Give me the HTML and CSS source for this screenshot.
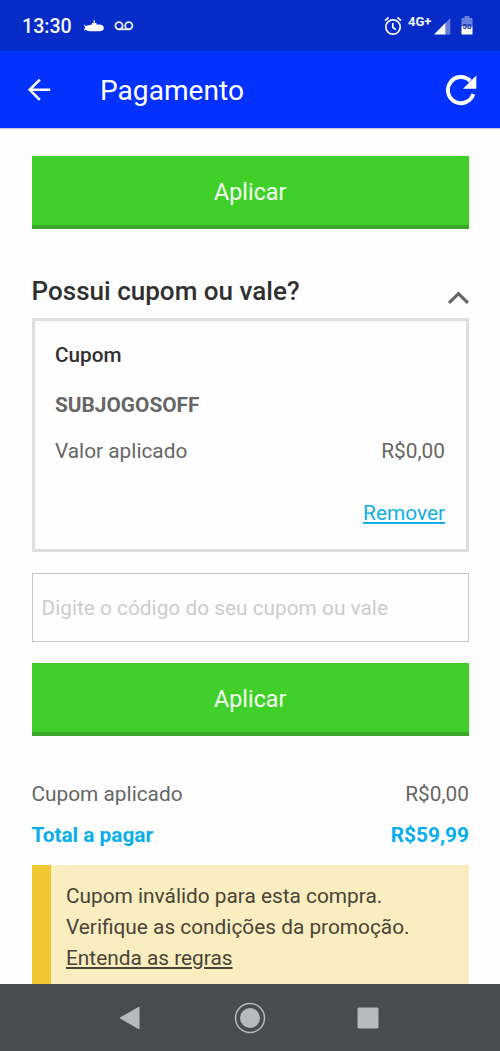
FILE: index.html
```html
<!DOCTYPE html>
<html lang="pt-BR">
<head>
<meta charset="utf-8">
<meta name="viewport" content="width=device-width, initial-scale=1">
<title>Pagamento</title>
<link rel="stylesheet" href="styles.css">
</head>
<body>
<div class="screen">
  <div class="status">
    <span class="clock">13:30</span>
    <svg class="sub" width="20" height="12" viewBox="0 0 20 12"><path fill="#fff" d="M0 4.200 2 6q2-.8 6-1.500V3h1.600V.3h1.200V3h1.600v1.500H15q4.800.3 4.800 3.400T15 11.300H6Q3.500 11.300 2 9.800L0 10.800 1 7.600Z"/></svg>
    <svg class="tape" width="20" height="10" viewBox="0 0 20 10" fill="none" stroke="#e8ecff" stroke-width="1.800"><circle cx="5" cy="4.700" r="3.600"/><circle cx="14.800" cy="4.700" r="3.600"/><path d="M5 8.300h10"/></svg>
    <span class="spacer"></span>
    <svg class="alarm" width="18" height="20" viewBox="0 0 18 20" fill="none" stroke="#f4f6ff" stroke-width="1.700"><circle cx="9" cy="11" r="7.200"/><path d="M1 4.600 4.600 1.500M17 4.600 13.400 1.500M8.800 7v4.500l3.200 2"/></svg>
    <span class="network">4G+</span>
    <svg class="signal" width="17" height="17" viewBox="0 0 17 17"><path fill="#6780df" d="M11.500 5 16.300 0v16.500h-4.800z"/><path fill="#fff" d="M0 16.500 11.500 4.800v11.700z"/></svg>
    <svg class="battery" width="12" height="19" viewBox="0 0 12 19"><path fill="#6780df" d="M3.500 0h5v2H11q.5 0 .5.500V11H.5V2.500Q.5 2 1 2h2.500z"/><path fill="#fff" d="M.5 10.500h11V18q0 .5-.5.500H1q-.5 0-.5-.500z"/><text class="level" x="6" y="13" text-anchor="middle">50</text></svg>
  </div>
  <header class="appbar">
    <svg class="back" width="24" height="24" viewBox="0 0 24 24" fill="none" stroke="#fff" stroke-width="2.600"><path d="M12.800 1.700 2.700 11.800l10.100 10.100M2.700 11.800h20.500"/></svg>
    <h1 class="title">Pagamento</h1>
    <svg class="reload" width="32" height="32" viewBox="0 0 32 32"><path fill="none" stroke="#fff" stroke-width="4" d="M25.200 7A13 13 0 1 0 28.300 20"/><path fill="#fff" d="M31.300 1.500v13.200H18z"/></svg>
  </header>
  <main class="content">
    <button class="apply">Aplicar</button>
    <section class="coupon">
      <div class="heading"><h2>Possui cupom ou vale?</h2><svg class="chevron" width="22" height="14" viewBox="0 0 22 14"><path fill="none" stroke="#666" stroke-width="3.200" d="M2 11.800 11.500 2.700 20.900 11.800"/></svg></div>
      <div class="card">
        <h3 class="label">Cupom</h3>
        <p class="code">SUBJOGOSOFF</p>
        <div class="row value"><span>Valor aplicado</span><span class="money">R$0,00</span></div>
        <a class="remove" href="#">Remover</a>
      </div>
      <input class="field" type="text" placeholder="Digite o código do seu cupom ou vale">
      <button class="apply">Aplicar</button>
    </section>
    <section class="totals">
      <div class="row"><span class="applied">Cupom aplicado</span><span class="money">R$0,00</span></div>
      <div class="row total"><span class="total-label">Total a pagar</span><span class="total-money">R$59,99</span></div>
    </section>
    <div class="alert">
      <p>Cupom inválido para esta compra.</p>
      <p>Verifique as condições da promoção.</p>
      <a class="rules" href="#">Entenda as regras</a>
    </div>
  </main>
  <nav class="navbar">
    <svg width="22" height="24" viewBox="0 0 22 24"><path fill="#b4babd" d="M19.500 1q1-.5 1 .6v20.800q0 1.100-1 .600L1.400 12.700q-1-.7 0-1.400z"/></svg>
    <svg width="32" height="32" viewBox="0 0 32 32"><circle cx="16" cy="16" r="14.500" fill="none" stroke="#b4babd" stroke-width="1.500"/><circle cx="16" cy="16" r="10" fill="#b4babd"/></svg>
    <svg width="22" height="22" viewBox="0 0 22 22"><rect x=".5" y=".5" width="21" height="21" rx="1.500" fill="#b4babd"/></svg>
  </nav>
</div>
</body>
</html>
```
FILE: styles.css
```css
* { box-sizing: border-box; margin: 0; padding: 0; }
body { font-family: Roboto, "Liberation Sans", sans-serif; background: #fff; }
.screen { width: 500px; height: 1051px; display: flex; flex-direction: column; overflow: hidden; background: #fefefe; color: #666; font-size: 20.830px; }
.status { height: 51px; flex: none; background: #062bc6; display: flex; align-items: center; padding: 0 27px 0 22px; color: #f4f6ff; }
.clock { font-size: 19.600px; font-weight: 500; line-height: 24px; width: 62px; padding-top: 3px; }
.tape { margin-left: 10px; }
.spacer { flex: 1; }
.network { font-size: 13px; font-weight: 700; line-height: 16px; margin: 0 2px 8px 6px; width: 24px; }
.signal { margin-top: 1px; }
.battery { margin-left: 10px; }
.level { font: 700 8px Roboto, sans-serif; fill: #102a9c; }
.appbar { height: 77px; flex: none; background: #0332ff; display: flex; align-items: center; padding: 0 23px 0 26.500px; box-shadow: 0 1px 1px #c8cbd8; color: #fff; }
.title { font-size: 28.100px; font-weight: 400; line-height: 34px; margin: 3px auto 0 49.500px; }
.content { flex: 1; min-height: 0; overflow: hidden; padding: 28px 31px 0 31.500px; }
.apply { display: block; width: 100%; height: 73px; padding-top: 2px; border: 0; border-bottom: 4px solid #3ba728; background: #41cf29; color: #f4fff2; font-family: inherit; font-size: 23.300px; line-height: 28px; }
.heading { margin-top: 46px; height: 43px; display: flex; justify-content: space-between; align-items: flex-start; }
.heading h2 { font-size: 26.050px; font-weight: 500; line-height: 32px; color: #303030; }
.chevron { margin-top: 16px; }
.card { height: 234px; border: 3px solid #dedede; padding: 22px 21px 0 20.500px; display: flex; flex-direction: column; }
.label { font-size: 20.700px; font-weight: 500; line-height: 24px; color: #303030; }
.code { font-weight: 700; line-height: 24px; margin-top: 26px; }
.row { display: flex; justify-content: space-between; line-height: 24px; }
.value { margin-top: 22px; }
.remove { align-self: flex-end; margin-top: 38px; line-height: 24px; color: #12aee6; text-decoration-thickness: 2px; text-underline-offset: 2px; }
.field { display: block; width: 100%; height: 69px; margin: 21px 0; padding: 1px 9px 0; border: 1px solid #c6c6c6; background: #fefefe; font: inherit; color: #303030; }
.field::placeholder { color: #ccc; opacity: 1; }
.totals { margin-top: 46px; }
.total { margin-top: 17px; color: #06aeec; font-weight: 700; }
.alert { margin-top: 18px; height: 130px; background: #faedc0; border-left: 19px solid #efc733; padding: 16px 15px 16px 15.500px; line-height: 31px; color: #494437; }
.rules { color: inherit; text-decoration-thickness: 1.500px; text-underline-offset: 2px; }
.navbar { height: 67px; flex: none; background: #454d52; display: flex; align-items: center; justify-content: space-between; padding: 0 121px 0 119px; }
.navbar svg:nth-child(2) { margin-left: 2px; }
```
